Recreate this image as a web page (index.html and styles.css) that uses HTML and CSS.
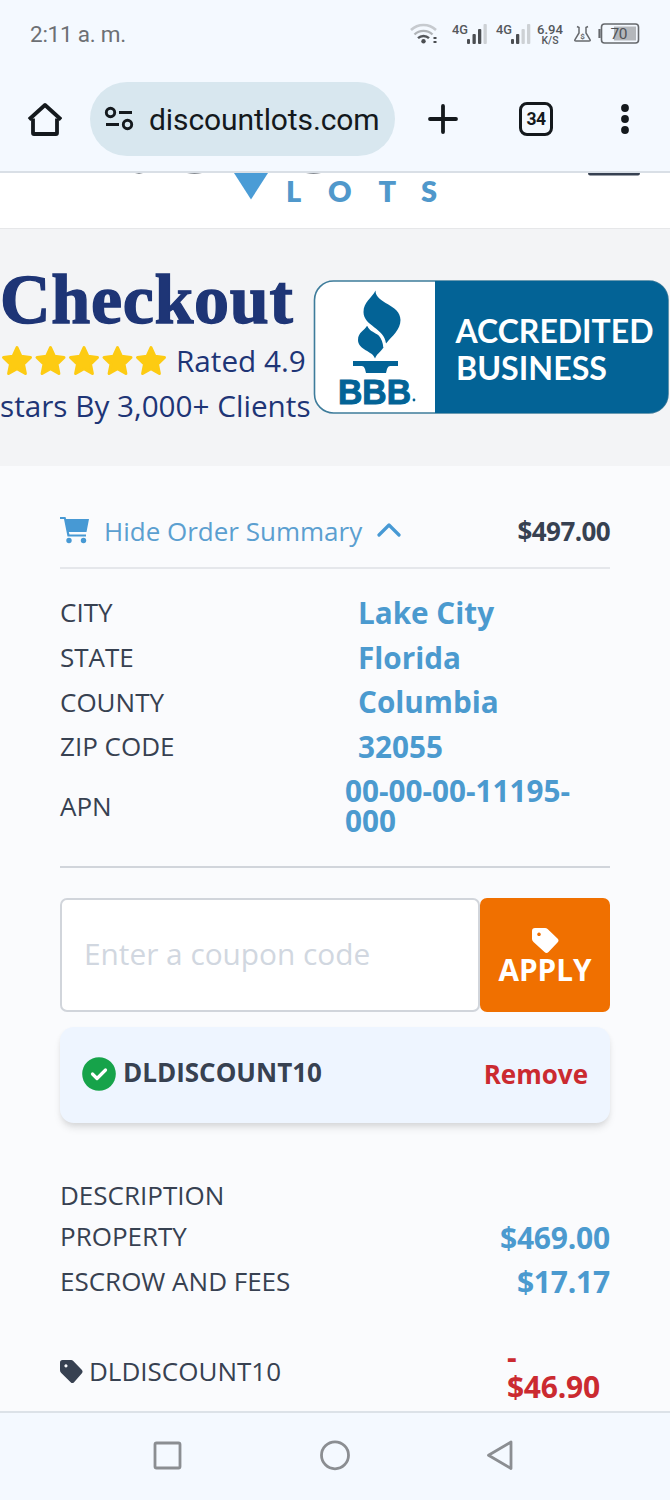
FILE: index.html
```html
<!DOCTYPE html>
<html lang="en">
<head>
<meta charset="utf-8">
<title>Checkout - discountlots.com</title>
<link rel="stylesheet" href="styles.css">
</head>
<body>
<div class="phone">
  <div class="status">
    <span class="clock">2:11 a. m.</span>
    <svg class="status-icons" width="232" height="28" viewBox="408 20 232 28">
      <g fill="none" stroke-linecap="butt">
        <path d="M411 30a18 18 0 0 1 25 0" stroke="#c6cacf" stroke-width="2.6"/>
        <path d="M414.500 34.500a13 13 0 0 1 18 0" stroke="#b0b4b8" stroke-width="2.400"/>
        <path d="M418 38.200a8 8 0 0 1 11 0" stroke="#55585c" stroke-width="2.400"/>
      </g>
      <g fill="#4b4e52">
        <circle cx="423.500" cy="41.300" r="2.200"/>
        <rect x="433.500" y="37" width="3" height="2"/><rect x="433.500" y="41" width="3" height="2"/>
        <rect x="467" y="39" width="3" height="5" rx="1"/><rect x="472.500" y="34" width="3.300" height="10" rx="1"/><rect x="478" y="29" width="3.300" height="15" rx="1"/>
        <rect x="511" y="39" width="3" height="5" rx="1"/><rect x="516" y="34" width="3.300" height="10" rx="1"/>
      </g>
      <g fill="#cdd1d5">
        <rect x="483.500" y="24" width="3.300" height="20" rx="1"/><rect x="521.500" y="29" width="3.300" height="15" rx="1"/><rect x="527" y="24" width="3.300" height="20" rx="1"/>
      </g>
      <g class="tiny">
        <text x="452" y="33.500" textLength="16" lengthAdjust="spacingAndGlyphs">4G</text>
        <text x="496" y="33.500" textLength="16" lengthAdjust="spacingAndGlyphs">4G</text>
        <text x="537" y="34" textLength="26" lengthAdjust="spacingAndGlyphs">6.94</text>
        <text x="541.500" y="44" class="unit" textLength="17" lengthAdjust="spacingAndGlyphs">K/S</text>
      </g>
      <path d="M577 26.500l2 1v5.500l-4 6.500q-.8 1.500 1 1.500h13q1.800 0 1-1.500l-4-6.500v-5.500l2-1" fill="none" stroke="#66696d" stroke-width="1.500"/>
      <text x="580.200" y="38.500" class="flask">$</text>
      <rect x="601.500" y="24" width="37" height="19" rx="3" fill="none" stroke="#66696d" stroke-width="1.600"/>
      <rect x="614" y="26.500" width="22" height="14" fill="#b4b7bb"/>
      <path d="M599.500 29v9" stroke="#66696d" stroke-width="2.200"/>
      <text x="610.500" y="39" class="charge" textLength="17">70</text>
    </svg>
  </div>

  <div class="browser">
    <svg class="home" width="36" height="36" viewBox="0 0 36 36" fill="none" stroke="#14191d" stroke-width="3.800" stroke-linejoin="round"><path d="M7 17.500V32q0 1 1 1h22q1 0 1-1V17.500"/><path d="M3 18.500L19 4l16 14.500"/></svg>
    <div class="address">
      <svg width="30" height="26" viewBox="0 0 30 26" fill="none" stroke="#14191d" stroke-width="2.900"><circle cx="6.500" cy="6.500" r="4.200"/><path d="M15 6.500h13M2 18.500h13"/><circle cx="23.500" cy="18.500" r="4.200"/></svg>
      <span>discountlots.com</span>
    </div>
    <svg class="plus" width="30" height="30" viewBox="0 0 30 30" stroke="#14191d" stroke-width="3.800" stroke-linecap="round"><path d="M15 2v26M2 15h26"/></svg>
    <div class="tabs">34</div>
    <svg class="more" width="8" height="32" viewBox="0 0 8 32" fill="#14191d"><circle cx="4" cy="5" r="3.900"/><circle cx="4" cy="16" r="3.900"/><circle cx="4" cy="27" r="3.900"/></svg>
  </div>

  <header class="site">
    <svg width="670" height="55" viewBox="0 173 670 55">
      <path d="M135 173h8l-4 .7zM187 173h15q-7.500 1.600-15 0zM306 173h15q-7.500 1.600-15 0z" fill="#5d646d"/>
      <path d="M234 173h34l-17 26.500z" fill="#4a9cd6"/>
      <path d="M588 173h52q0 2.500-2 2.500h-48q-2 0-2-2.500z" fill="#374151"/>
      <g class="lots"><text x="286" y="202">L</text><text x="328" y="202">O</text><text x="378.500" y="202">T</text><text x="421" y="202">S</text></g>
    </svg>
  </header>

  <section class="hero">
    <div class="intro">
      <h1>Checkout</h1>
      <p><svg class="stars" width="168" height="33" viewBox="0 0 168 33" fill="#fdcb12" stroke="#fdcb12" stroke-width="3" stroke-linejoin="round">
        <defs><path id="star" d="M17 3.500l4 8.800 9.500 1.200-7 6.600 1.900 9.400-8.400-4.700-8.400 4.700 1.900-9.400-7-6.600 9.500-1.200z"/></defs>
        <use href="#star"/><use href="#star" x="33.500"/><use href="#star" x="67"/><use href="#star" x="100.500"/><use href="#star" x="134"/>
      </svg><span class="rated">Rated 4.9</span><br><span class="clients">stars By 3,000+ Clients</span></p>
    </div>
    <svg class="bbb" width="356" height="134" viewBox="313 280 356 134">
      <rect x="314.500" y="281" width="353.500" height="132" rx="19" fill="#fff" stroke="#3e7c9b" stroke-width="1.600"/>
      <path d="M435 281h214a19 19 0 0 1 19 19v94a19 19 0 0 1-19 19H435z" fill="#036396"/>
      <g fill="#036396">
        <path d="M375.500 290.500C372 298 363.500 302 363.500 312c0 14 21 16 22.500 31.500C392 336 400.500 330 400.500 320c0-16-25-16-25-29.500z"/>
        <path d="M367.500 325c-3 6-9.500 7-9.500 15 0 10 15 11 17 18.500 2-6 9.500-8 9.500-15.500 0-9-17-10-17-18z"/>
        <path d="M363.500 321C370 329 383 331 384.500 347" fill="none" stroke="#fff" stroke-width="2.500"/>
        <path d="M353 361h45v5h-8q-2 0-3 3l-1 4h-20l-1-4q-1-3-3-3h-9z"/>
        <text x="338" y="403.500" class="bbb-name" textLength="73" lengthAdjust="spacingAndGlyphs">BBB</text>
        <circle cx="414" cy="400" r="1.400"/>
      </g>
      <g class="accredited"><text x="455.500" y="343" textLength="198" lengthAdjust="spacingAndGlyphs">ACCREDITED</text><text x="456" y="380" textLength="151" lengthAdjust="spacingAndGlyphs">BUSINESS</text></g>
    </svg>
  </section>

  <main class="order">
    <div class="summary">
      <svg width="30" height="28" viewBox="0 0 30 28" fill="#4799d4"><path d="M0 0h5.500l.6 2H29L26.500 15H8.800l.7 2.500H26v2H7.500L4 2H0z"/><circle cx="9" cy="23.500" r="2.700"/><circle cx="23.500" cy="23.500" r="2.700"/></svg>
      <span class="toggle">Hide Order Summary</span>
      <svg class="chevron" width="24" height="16" viewBox="0 0 24 16" fill="none" stroke="#4799d4" stroke-width="3.200" stroke-linecap="round" stroke-linejoin="round"><path d="M2 12L12 2l10 10"/></svg>
      <strong>$497.00</strong>
    </div>
    <dl class="facts">
      <dt>CITY</dt><dd>Lake City</dd>
      <dt>STATE</dt><dd>Florida</dd>
      <dt>COUNTY</dt><dd>Columbia</dd>
      <dt>ZIP CODE</dt><dd>32055</dd>
      <dt class="tall">APN</dt><dd class="tall">00-00-00-11195-<br>000</dd>
    </dl>
    <div class="coupon">
      <div class="field">Enter a coupon code</div>
      <div class="apply">
        <svg width="27" height="26" viewBox="0 0 27 26"><path fill="#fff" fill-rule="evenodd" d="M3 0H13q1.500 0 2.600 1L25.500 10.500q2 2 0 4L16.500 24q-2 2-4 0L1.500 14Q0 12.500 0 11V3Q0 0 3 0zM7 4.500a1.800 1.800 0 1 0 .01 0z"/></svg>
        <span>APPLY</span>
      </div>
    </div>
    <div class="applied">
      <svg width="34" height="34" viewBox="0 0 34 34"><circle cx="17" cy="17" r="16.800" fill="#16a34a"/><path d="M10.500 17l4.500 4.500 8.500-8.500" fill="none" stroke="#fff" stroke-width="3.200" stroke-linecap="round" stroke-linejoin="round"/></svg>
      <b>DLDISCOUNT10</b>
      <span class="remove">Remove</span>
    </div>
    <div class="lines">
      <div class="line head">DESCRIPTION</div>
      <div class="line"><span>PROPERTY</span><b>$469.00</b></div>
      <div class="line"><span>ESCROW AND FEES</span><b>$17.17</b></div>
      <div class="line discount">
        <svg width="23" height="24" viewBox="0 0 27 26" preserveAspectRatio="none"><path fill="#374151" fill-rule="evenodd" d="M3 0H13q1.500 0 2.600 1L25.500 10.500q2 2 0 4L16.500 24q-2 2-4 0L1.500 14Q0 12.500 0 11V3Q0 0 3 0zM7 4.500a1.800 1.800 0 1 0 .01 0z"/></svg>
        <span>DLDISCOUNT10</span><b>-<br>$46.90</b>
      </div>
    </div>
  </main>

  <nav class="keys">
    <svg width="670" height="87" viewBox="0 1413 670 87" fill="none" stroke="#8b8e92" stroke-width="2.800" stroke-linejoin="round"><rect x="155" y="1443" width="25" height="25" rx="1.500"/><circle cx="335" cy="1455.300" r="13.500"/><path d="M511 1442v26.500L488.500 1455.300z"/></svg>
  </nav>
</div>
</body>
</html>
```
FILE: styles.css
```css
* { box-sizing: border-box; }
body, h1, p, dl, dd { margin: 0; }
body { background: #f4f9ff; font-family: "Open Sans", "Noto Sans", sans-serif; color: #374151; }
.phone { width: 670px; height: 1500px; overflow: hidden; display: flex; flex-direction: column; }
.phone svg { flex: none; }

.status { height: 68px; display: flex; align-items: center; justify-content: space-between; padding: 0 30px; font-family: Roboto, sans-serif; }
.clock { font-size: 22.500px; letter-spacing: -.25px; color: #6d7074; }
.tiny { fill: #55585c; font: 500 13px Roboto, sans-serif; }
.unit { font-size: 10.500px; }
.flask { fill: #66696d; font: 700 8px Roboto, sans-serif; }
.charge { fill: #505357; font: 400 15.500px Roboto, sans-serif; }

.browser { height: 105px; display: flex; align-items: center; padding: 0 0 1px 26px; border-bottom: 2px solid #d9dfe6; font-family: Roboto, sans-serif; color: #14191d; }
.address { display: flex; align-items: center; gap: 15px; width: 305px; height: 74px; margin-left: 28px; padding-left: 14px; border-radius: 37px; background: #d8e7ef; font-size: 30px; letter-spacing: -.1px; white-space: nowrap; }
.plus { margin-left: 33px; }
.tabs { width: 34px; height: 34px; margin-left: 61px; border: 3.500px solid #14191d; border-radius: 8px; font-size: 17.500px; font-weight: 700; line-height: 28px; letter-spacing: -.6px; text-align: center; }
.more { margin-left: 68px; }

.site { height: 55px; background: #fff; }
.lots { fill: #5098cb; font: 800 29px Lato, sans-serif; }
.hero { height: 238px; display: flex; background: #f3f4f6; border-top: 1px solid #e6e7e9; color: #1e3576; }
.intro { width: 313px; padding-top: 31px; white-space: nowrap; }
h1 { font: 700 70px/80px "Liberation Serif", serif; letter-spacing: .7px; -webkit-text-stroke: 1.400px #1e3576; }
.intro p { margin-top: -2px; font-size: 29.700px; line-height: 45px; }
.stars { vertical-align: -5px; margin-right: 8px; }
.bbb { margin-top: 51px; }
.bbb-name { font: 700 35px "Liberation Sans", sans-serif; stroke: #036396; stroke-width: 1px; }
.accredited { fill: #fff; font: 700 32px Lato, sans-serif; }

.order { height: 945px; flex: none; padding: 37px 60px 0; background: #fafbfd; font-size: 26px; }
.summary { display: flex; align-items: center; height: 66px; padding-bottom: 9px; border-bottom: 2px solid #e5e7eb; }
.toggle { margin-left: 14px; color: #5b9fd0; font-size: 26px; }
.chevron { margin-left: 15px; }
.summary strong { margin-left: auto; font-size: 26px; letter-spacing: -.6px; }
.facts { display: grid; grid-template-columns: 285px 265px; grid-auto-rows: 44.700px; align-items: center; height: 299px; padding-top: 21px; border-bottom: 2px solid #d1d5db; }
.facts dd { padding-left: 13px; font-size: 29.700px; font-weight: 700; color: #4b9acf; }
.facts .tall { margin-top: 30px; }
.facts dd.tall { padding-left: 0; line-height: 30px; white-space: nowrap; }

.coupon { display: flex; height: 114px; margin-top: 30px; }
.field { width: 420px; padding-left: 22px; border: 2px solid #d1d5db; border-radius: 7px; background: #fff; color: #d1d7e0; font-size: 29.800px; line-height: 107px; }
.apply { display: flex; flex-direction: column; align-items: center; width: 130px; padding-top: 30px; border-radius: 7px; background: #f07000; color: #fff; font-size: 29.700px; font-weight: 700; line-height: 32px; }
.applied { display: flex; align-items: center; height: 96px; margin-top: 15px; padding: 0 22px; border-radius: 14px; background: #eef5ff; box-shadow: 0 6px 9px -2px rgba(0,0,0,.13), 0 2px 5px rgba(0,0,0,.04); }
.applied svg { margin-top: -2px; }
.applied b { margin: -6px auto 0 7px; font-size: 26px; }
.remove { margin-top: -2px; color: #cb2a30; font-size: 26px; font-weight: 700; }
.lines { padding-top: 52px; }
.line { display: flex; align-items: center; justify-content: space-between; height: 44.500px; }
.line.head { height: 40px; }
.line span { margin-top: -2px; }
.line b { color: #4b9acf; font-size: 30px; letter-spacing: -.2px; }
.line.discount { height: 90px; margin-top: 23px; justify-content: flex-start; }
.discount span { margin-left: 6px; }
.line.discount b { margin: 0 10px 0 auto; color: #cb2a30; line-height: 30px; }

.keys { height: 89px; flex: none; border-top: 2px solid #dce2e8; }
```
